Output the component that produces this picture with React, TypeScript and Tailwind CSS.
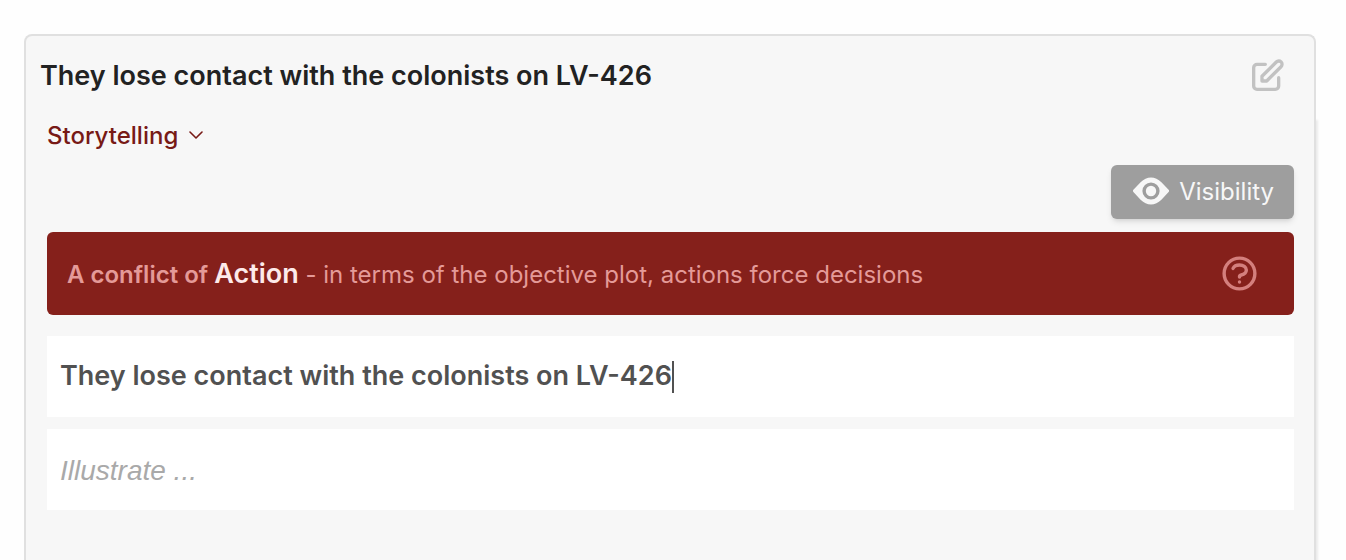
import { useState } from "react";

function EditIcon() {
  return (
    <svg className="size-10" viewBox="0 0 24 24" fill="none" stroke="currentColor" strokeWidth="2" strokeLinecap="round" strokeLinejoin="round" aria-hidden="true">
      <path d="M11 5H6a2 2 0 00-2 2v11a2 2 0 002 2h11a2 2 0 002-2v-5m-1.414-9.414a2 2 0 112.828 2.828L11.828 15H9v-2.828l8.586-8.586z" />
    </svg>
  );
}

function HelpIcon() {
  return (
    <svg className="size-[41px]" viewBox="0 0 24 24" fill="none" stroke="currentColor" strokeWidth="2" strokeLinecap="round" strokeLinejoin="round" aria-hidden="true">
      <path d="M8.228 9c.549-1.165 2.03-2 3.772-2 2.21 0 4 1.343 4 3 0 1.4-1.278 2.575-3.006 2.907-.542.104-.994.54-.994 1.093m0 3h.01M21 12a9 9 0 11-18 0 9 9 0 0118 0z" />
    </svg>
  );
}

function EyeIcon() {
  return (
    <svg className="h-[30px] w-9" viewBox="0 0 36 30" fill="currentColor" aria-hidden="true">
      <path
        fillRule="evenodd"
        d="M.4 12.800 7.600 5.200C10.800 2 14.200 .4 18 .4s7.200 1.600 10.400 4.800l7.200 7.600c.7.700.7 1.500 0 2.200l-7.200 7.700C25.200 25.900 21.800 27.400 18 27.400s-7.200-1.500-10.400-4.700L.4 15c-.6-.7-.6-1.500 0-2.200ZM18 5.400a8.600 8.600 0 1 0 0 17.200 8.600 8.600 0 0 0 0-17.200Z"
      />
      <circle cx="18" cy="14" r="5.200" />
    </svg>
  );
}

function ChevronIcon() {
  return (
    <svg className="h-2.5 w-4" viewBox="0 0 16 10" fill="none" stroke="currentColor" strokeWidth="1.600" strokeLinecap="round" strokeLinejoin="round" aria-hidden="true">
      <path d="M2 1l6 6 6-6" />
    </svg>
  );
}

export default function App() {
  const [title, setTitle] = useState("They lose contact with the colonists on LV-426");
  const [illustration, setIllustration] = useState("");

  return (
    <main className="flex min-h-screen flex-col bg-[#fefefe] pt-[34px] pr-[30px] pl-6 font-['Inter',sans-serif]">
      <article className="flex flex-1 flex-col rounded-t-lg border-2 border-b-0 border-[#e0e0e0] bg-[#f7f7f7]">
        <header className="flex h-20 items-center justify-between pr-[27px] pl-[14px]">
          <h1 className="text-[27px] leading-9 font-semibold text-[#222]">{title}</h1>
          <button type="button" aria-label="Edit" className="text-[#c2c2c2]">
            <EditIcon />
          </button>
        </header>

        <div className="-mr-0.5 flex-1 pr-[22px] pl-[21px] shadow-[2px_4px_2px_0_#00000014]">
          <button type="button" className="flex h-10 items-center gap-2.5 text-2xl font-medium text-[#771a16]">
            Storytelling
            <ChevronIcon />
          </button>

          <div className="mt-[9px] flex justify-end">
            <button type="button" className="flex h-[54px] items-center gap-2.5 rounded-md bg-[#9e9e9e] pr-5 pl-[22px] text-2xl text-[#f7f7f7] shadow-md">
              <EyeIcon />
              Visibility
            </button>
          </div>

          <section className="mt-[13px] flex h-[83px] items-center justify-between rounded-md bg-[#85201b] pr-[34px] pl-5 text-2xl text-[#e49a98]">
            <p>
              <strong className="font-semibold">
                A conflict of <span className="text-[27px] text-[#fdeaea]">Action</span>
              </strong>{" "}
              - in terms of the objective plot, actions force decisions
            </p>
            <button type="button" aria-label="Help" className="text-[#d47f7d]">
              <HelpIcon />
            </button>
          </section>

          <label className="mt-[21px] flex h-[81px] items-center bg-white px-[13px] text-[27px] font-semibold text-[#515151]">
            <input
              aria-label="Title"
              value={title}
              onChange={(e) => setTitle(e.target.value)}
              className="field-sizing-content caret-transparent outline-none"
            />
            <span className="h-8 w-0.5 bg-[#515151]" />
          </label>

          <input
            aria-label="Illustrate"
            placeholder="Illustrate ..."
            value={illustration}
            onChange={(e) => setIllustration(e.target.value)}
            className="mt-3 h-[81px] w-full bg-white px-[13px] text-[28px] text-[#515151] outline-none placeholder:font-['Liberation_Sans',sans-serif] placeholder:text-[#a9a9a9] placeholder:italic"
          />
        </div>
      </article>
    </main>
  );
}
